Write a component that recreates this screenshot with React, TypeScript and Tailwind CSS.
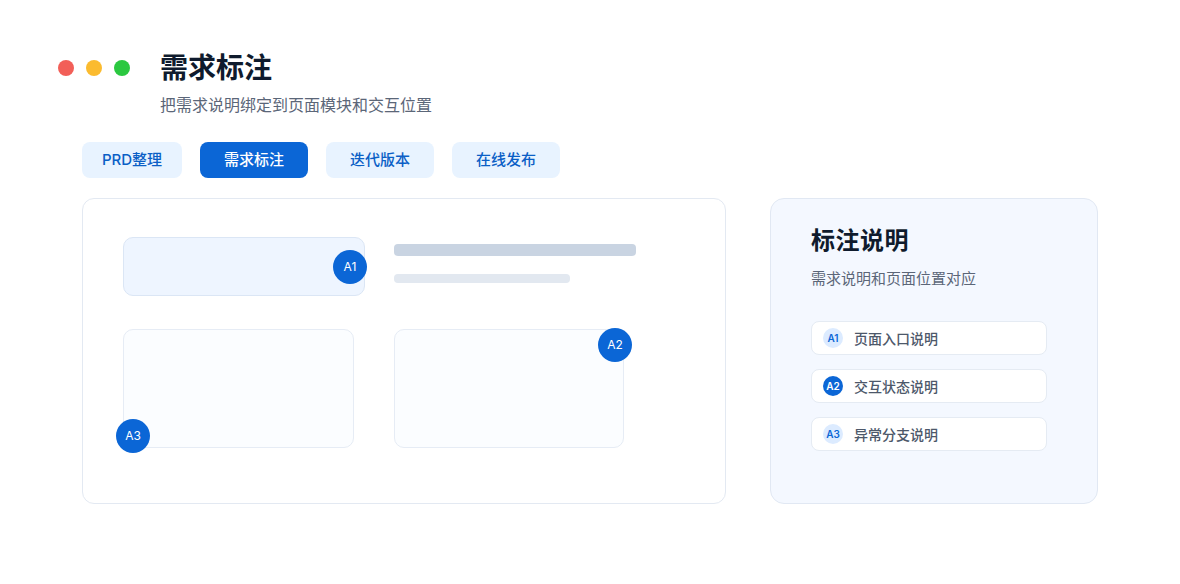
import React from "react";

const tabs = [
  { label: "PRD整理", w: "w-[100px]", active: false },
  { label: "需求标注", w: "w-[108px]", active: true },
  { label: "迭代版本", w: "w-[108px]", active: false },
  { label: "在线发布", w: "w-[108px]", active: false },
];

const notes = [
  { id: "A1", text: "页面入口说明", filled: false },
  { id: "A2", text: "交互状态说明", filled: true },
  { id: "A3", text: "异常分支说明", filled: false },
];

function Pin({ id, className }: { id: string; className: string }) {
  return (
    <div
      className={`absolute flex h-[34px] w-[34px] items-center justify-center rounded-full bg-[#0b66d6] text-[12px] font-normal text-white ${className}`}
    >
      {id}
    </div>
  );
}

export default function App() {
  return (
    <div
      className="min-h-screen w-[1180px] h-[584px] bg-white text-[#0f1b2d]"
      style={{ fontFamily: '"Inter", "Noto Sans CJK SC", sans-serif' }}
    >
      <div className="pl-[58px] pt-[51px]">
        {/* header */}
        <div className="flex">
          <div className="flex gap-[12px] pt-[9px]">
            <span className="h-[16px] w-[16px] rounded-full bg-[#f25f58]" />
            <span className="h-[16px] w-[16px] rounded-full bg-[#fbbb2f]" />
            <span className="h-[16px] w-[16px] rounded-full bg-[#2bc840]" />
          </div>
          <div className="ml-[30px]">
            <h1 className="text-[28px] font-bold leading-[34px]">需求标注</h1>
            <p className="mt-[10px] text-[16px] leading-[20px] text-[#5b6678]">
              把需求说明绑定到页面模块和交互位置
            </p>
          </div>
        </div>
      </div>

      {/* tabs */}
      <div className="mt-[27px] flex gap-[18px] pl-[82px]">
        {tabs.map((t) => (
          <div
            key={t.label}
            className={`flex h-[36px] ${t.w} items-center justify-center rounded-[8px] text-[15px] font-medium ${
              t.active ? "bg-[#0b66d6] text-white" : "bg-[#e8f3ff] text-[#0b5fc6]"
            }`}
          >
            {t.label}
          </div>
        ))}
      </div>

      {/* main */}
      <div className="mt-[20px] flex gap-[44px] pl-[82px]">
        <section className="h-[306px] w-[644px] rounded-[12px] border border-[#e3e9f2] bg-white pl-[40px] pt-[38px]">
          <div className="flex">
            <div className="relative h-[59px] w-[242px] rounded-[10px] border border-[#dbe6f5] bg-[#eef5ff]">
              <Pin id="A1" className="right-[-3px] top-[12px]" />
            </div>
            <div className="ml-[29px] pt-[7px]">
              <div className="h-[12px] w-[242px] rounded-[4px] bg-[#c9d4e2]" />
              <div className="mt-[18px] h-[9px] w-[176px] rounded-[4px] bg-[#e2e8f0]" />
            </div>
          </div>
          <div className="mt-[33px] flex gap-[40px]">
            <div className="relative h-[119px] w-[231px] rounded-[10px] border border-[#e6ecf5] bg-[#fbfdff]">
              <Pin id="A3" className="left-[-8px] bottom-[-6px]" />
            </div>
            <div className="relative h-[119px] w-[230px] rounded-[10px] border border-[#e6ecf5] bg-[#fbfdff]">
              <Pin id="A2" className="right-[-9px] top-[-2px]" />
            </div>
          </div>
        </section>

        <section className="h-[306px] w-[328px] rounded-[14px] border border-[#e1e8f3] bg-[#f4f8ff] pl-[40px] pt-[26px]">
          <h2 className="text-[24px] font-bold leading-[32px] tracking-[0.5px]">标注说明</h2>
          <p className="mt-[12px] text-[15px] leading-[20px] text-[#5b6678]">
            需求说明和页面位置对应
          </p>
          <div className="mt-[32px] flex flex-col gap-[14px]">
            {notes.map((n) => (
              <div
                key={n.id}
                className="flex h-[34px] w-[236px] items-center rounded-[8px] border border-[#e5ebf3] bg-white pl-[11px]"
              >
                <span
                  className={`flex h-[20px] w-[20px] items-center justify-center rounded-full text-[10px] font-semibold ${
                    n.filled ? "bg-[#0b66d6] text-white" : "bg-[#dcebff] text-[#0b66d6]"
                  }`}
                >
                  {n.id}
                </span>
                <span className="ml-[11px] text-[14px] font-medium text-[#4d586a]">{n.text}</span>
              </div>
            ))}
          </div>
        </section>
      </div>
    </div>
  );
}
